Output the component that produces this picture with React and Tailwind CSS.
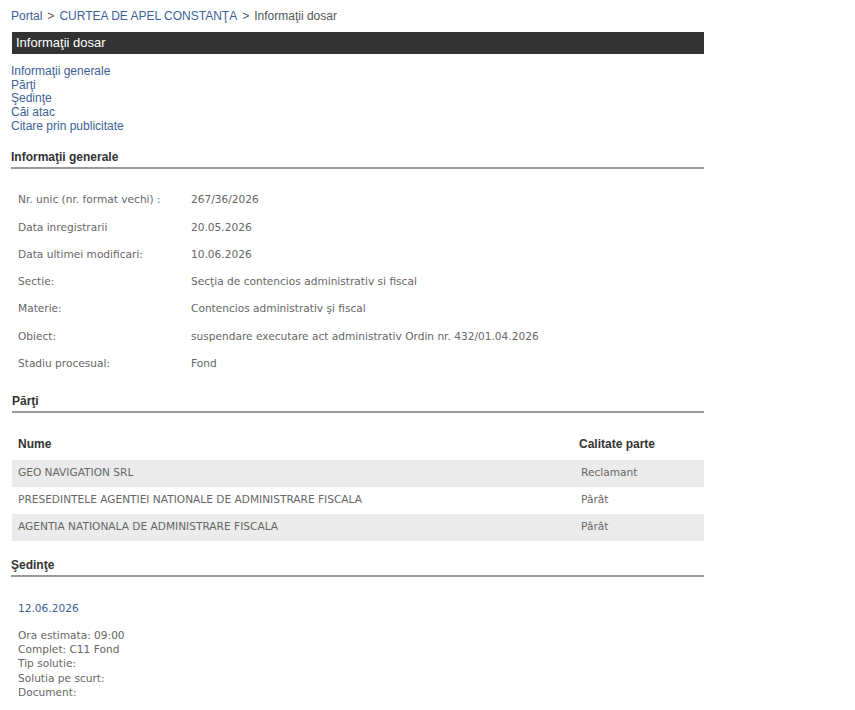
import React from "react";

const arial = { fontFamily: '"Liberation Sans", Arial, sans-serif' };

const info = [
  ["Nr. unic (nr. format vechi) :", "267/36/2026"],
  ["Data inregistrarii", "20.05.2026"],
  ["Data ultimei modificari:", "10.06.2026"],
  ["Sectie:", "Secţia de contencios administrativ si fiscal"],
  ["Materie:", "Contencios administrativ şi fiscal"],
  ["Obiect:", "suspendare executare act administrativ Ordin nr. 432/01.04.2026"],
  ["Stadiu procesual:", "Fond"],
];

const parti = [
  ["GEO NAVIGATION SRL", "Reclamant"],
  ["PRESEDINTELE AGENTIEI NATIONALE DE ADMINISTRARE FISCALA", "Pârât"],
  ["AGENTIA NATIONALA DE ADMINISTRARE FISCALA", "Pârât"],
];

function SectionTitle({ children }) {
  return (
    <div className="border-b-2 border-[#999] pb-[3px] text-[12px] font-bold leading-[14px] text-[#333]" style={arial}>
      {children}
    </div>
  );
}

export default function App() {
  return (
    <div className="min-h-[710px] w-[855px] bg-white">
      <div className="ml-[11px] w-[693px] font-['DejaVu_Sans',Tahoma,sans-serif] text-[10.6px] text-[#666]">
        {/* breadcrumb */}
        <div className="pt-[8px] text-[12px] leading-[16px] text-[#555]" style={arial}>
          <a className="text-[#3d5f97]">Portal</a>
          <span className="mx-[5px]">&gt;</span>
          <a className="text-[#3d5f97]">CURTEA DE APEL CONSTANŢA</a>
          <span className="mx-[5px]">&gt;</span>
          <span>Informaţii dosar</span>
        </div>

        <div className="mt-[8px] ml-[1px] flex h-[22px] items-center bg-[#333] px-[4px] text-[13px] text-white" style={arial}>
          Informaţii dosar
        </div>

        <ul className="mt-[11px] text-[12px] leading-[13.7px] text-[#3d5f97]" style={arial}>
          <li>Informaţii generale</li>
          <li>Părţi</li>
          <li>Şedinţe</li>
          <li>Căi atac</li>
          <li>Citare prin publicitate</li>
        </ul>

        <div className="mt-[16px]">
          <SectionTitle>Informaţii generale</SectionTitle>
        </div>
        <div className="mt-[18px] pl-[7px]">
          {info.map(([k, v]) => (
            <div key={k} className="flex h-[27.3px] items-center">
              <div className="w-[173px]">{k}</div>
              <div>{v}</div>
            </div>
          ))}
        </div>

        <div className="mt-[16px] ml-[1px]">
          <SectionTitle>Părţi</SectionTitle>
        </div>
        <div className="mt-[16px] ml-[1px]">
          <div className="flex h-[31px] items-center text-[12px] font-bold text-[#333]" style={arial}>
            <div className="w-[567px] pl-[6px]">Nume</div>
            <div>Calitate parte</div>
          </div>
          {parti.map(([n, c], i) => (
            <div key={n} className={`flex h-[27px] items-center ${i % 2 === 0 ? "bg-[#ebebeb]" : ""}`}>
              <div className="w-[569px] pl-[6px]">{n}</div>
              <div>{c}</div>
            </div>
          ))}
        </div>

        <div className="mt-[17px]">
          <SectionTitle>Şedinţe</SectionTitle>
        </div>
        <div className="mt-[25px] pl-[7px]">
          <div className="leading-[13px] text-[#3d5f97]">12.06.2026</div>
          <div className="mt-[13px] leading-[14.4px]">
            <div>Ora estimata: 09:00</div>
            <div>Complet: C11 Fond</div>
            <div>Tip solutie:</div>
            <div>Solutia pe scurt:</div>
            <div>Document:</div>
          </div>
        </div>
      </div>
    </div>
  );
}
